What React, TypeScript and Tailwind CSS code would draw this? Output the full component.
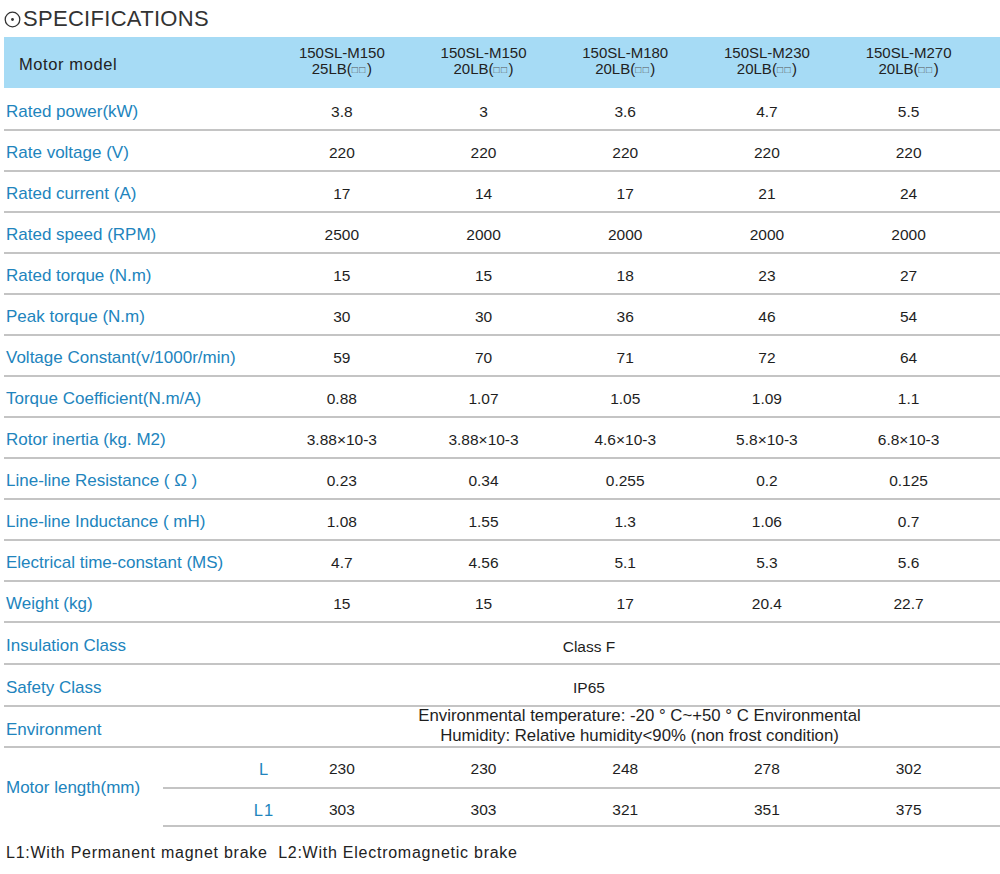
// Motor specifications sheet: title, light-blue header band, ruled spec rows,
// a two-row "Motor length" block and a footnote.

const font = { fontFamily: '"Liberation Sans", Arial, sans-serif' }

const models = [
  ['150SL-M150', '25LB'],
  ['150SL-M150', '20LB'],
  ['150SL-M180', '20LB'],
  ['150SL-M230', '20LB'],
  ['150SL-M270', '20LB'],
]

const specs: [string, string[]][] = [
  ['Rated power(kW)', ['3.8', '3', '3.6', '4.7', '5.5']],
  ['Rate voltage (V)', ['220', '220', '220', '220', '220']],
  ['Rated current (A)', ['17', '14', '17', '21', '24']],
  ['Rated speed (RPM)', ['2500', '2000', '2000', '2000', '2000']],
  ['Rated torque (N.m)', ['15', '15', '18', '23', '27']],
  ['Peak torque (N.m)', ['30', '30', '36', '46', '54']],
  ['Voltage Constant(v/1000r/min)', ['59', '70', '71', '72', '64']],
  ['Torque Coefficient(N.m/A)', ['0.88', '1.07', '1.05', '1.09', '1.1']],
  ['Rotor inertia (kg. M2)', ['3.88×10-3', '3.88×10-3', '4.6×10-3', '5.8×10-3', '6.8×10-3']],
  ['Line-line Resistance ( Ω )', ['0.23', '0.34', '0.255', '0.2', '0.125']],
  ['Line-line Inductance ( mH)', ['1.08', '1.55', '1.3', '1.06', '0.7']],
  ['Electrical time-constant (MS)', ['4.7', '4.56', '5.1', '5.3', '5.6']],
  ['Weight (kg)', ['15', '15', '17', '20.4', '22.7']],
]

const lengths: [string, string[]][] = [
  ['L', ['230', '230', '248', '278', '302']],
  ['L1', ['303', '303', '321', '351', '375']],
]

const rowGrid = 'grid grid-cols-[267px_repeat(5,141.7px)_1fr] items-center border-b-2 border-[#c4c4c4]'
const label = 'pl-[2px] text-[17px] text-[#2184bd]'
const cell = 'text-center text-[15.5px] text-[#1e1e1e]'

function TargetIcon() {
  return (
    <svg width="17" height="17" viewBox="0 0 17 17" className="mr-[2px] mt-[1px]">
      <circle cx="8.5" cy="8.5" r="7.3" fill="none" stroke="#333" strokeWidth="1.3" />
      <circle cx="8.5" cy="8.5" r="1.4" fill="#333" />
    </svg>
  )
}

export default function App() {
  return (
    <div className="w-[1000px] h-[874px] bg-white" style={font}>
      {/* ── Title ───────────────────────────── */}
      <div className="flex items-center h-[37px] pl-[4px] pt-[1px] text-[22px] text-[#333] leading-none">
        <TargetIcon />
        <span className="tracking-[0.3px]">SPECIFICATIONS</span>
      </div>

      <div className="ml-[4px] w-[996px]">
        {/* ── Header band ─────────────────────── */}
        <div className="grid grid-cols-[267px_repeat(5,141.7px)_1fr] items-center h-[51px] bg-[#a6dbf5]">
          <div className="pl-[15px] pt-[3px] text-[16.5px] tracking-[0.6px] text-[#222]">Motor model</div>
          {models.map(([a, b], i) => (
            <div key={i} className="text-center text-[15px] leading-[16px] text-[#222] -mt-[2px]">
              <div>{a}</div>
              <div>
                {b}(<span className="text-[10px] tracking-[1.5px] text-[#555] align-[1px]">□□</span>)
              </div>
            </div>
          ))}
          <div />
        </div>

        {/* ── Spec rows ───────────────────────── */}
        {specs.map(([name, vals], r) => (
          <div key={name} className={`${rowGrid} ${r === 0 ? 'h-[43px] pt-[7px]' : 'h-[41px] pt-[5px]'}`}>
            <div className={label}>{name}</div>
            {vals.map((v, i) => (
              <div key={i} className={cell}>{v}</div>
            ))}
            <div />
          </div>
        ))}

        <div className={`${rowGrid} h-[42px] pt-[5px]`}>
          <div className={label}>Insulation Class</div>
          <div className="col-span-6 pr-[93px] -mt-[2px] pt-[4px] text-center text-[15.5px] text-[#1e1e1e]">Class F</div>
        </div>
        <div className={`${rowGrid} h-[42px] pt-[5px]`}>
          <div className={label}>Safety Class</div>
          <div className="col-span-6 pr-[93px] text-center text-[15.5px] text-[#1e1e1e]">IP65</div>
        </div>
        <div className={`${rowGrid} h-[41px]`}>
          <div className={`${label} pt-[6px]`}>Environment</div>
          <div className="col-span-6 pl-[8px] -mt-[1px] text-center text-[16.8px] leading-[20px] text-[#1e1e1e]">
            Environmental temperature: -20 ° C~+50 ° C Environmental
            <br />
            Humidity: Relative humidity&lt;90% (non frost condition)
          </div>
        </div>

        {/* ── Motor length block ──────────────── */}
        <div className="flex">
          <div className={`${label} w-[159px] flex items-center`}>Motor length(mm)</div>
          <div className="flex-1">
            {lengths.map(([k, vals], r) => (
              <div
                key={k}
                className={`grid grid-cols-[108px_repeat(5,141.7px)_1fr] items-center border-b-2 border-[#c4c4c4] ${r === 0 ? 'h-[41px] pt-[3px]' : 'h-[38px] pt-[6px]'}`}
              >
                <div className="flex justify-end">
                  <div className="w-[14px] flex justify-center text-[16.5px] tracking-[1px] text-[#2184bd]">{k}</div>
                </div>
                {vals.map((v, i) => (
                  <div key={i} className={cell}>{v}</div>
                ))}
                <div />
              </div>
            ))}
          </div>
        </div>
      </div>

      {/* ── Footnote ────────────────────────── */}
      <div className="pl-[6px] pt-[14px] text-[16px] tracking-[0.75px] text-[#222]">
        L1:With Permanent magnet brake&nbsp; L2:With Electromagnetic brake
      </div>
    </div>
  )
}
